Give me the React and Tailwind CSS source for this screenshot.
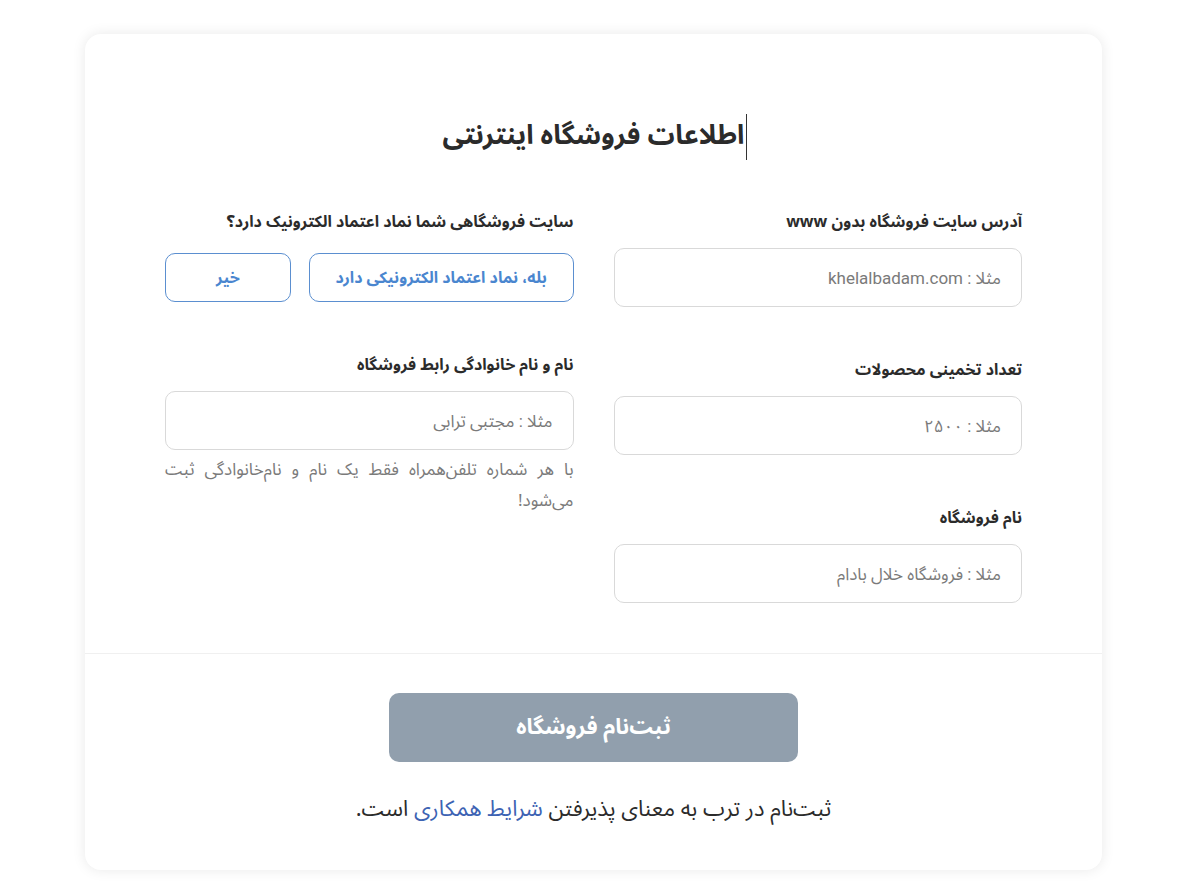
import React from "react";

const font = { fontFamily: '"Noto Sans Arabic", "DejaVu Sans", "Noto Sans", sans-serif' };

function Field({ label, placeholder, className = "" }) {
  return (
    <div className={"flex flex-col " + className}>
      <label className="text-[16px] font-bold text-[#2b2b2b] leading-[20px]">{label}</label>
      <input
        dir="rtl"
        placeholder={placeholder}
        className="mt-[16px] h-[59px] w-full rounded-[10px] border border-[#d9d9d9] bg-white px-[20px] text-[17px] text-[#444] placeholder:text-[#7a7a7a] outline-none"
        style={{ fontFamily: 'Roboto, "Noto Sans Arabic", "DejaVu Sans", sans-serif' }}
      />
    </div>
  );
}

export default function App() {
  return (
    <div dir="rtl" className="min-h-[895px] w-full bg-white pt-[34px] pb-[27px]" style={font}>
      <div className="mx-auto w-[1017px] -translate-x-[2px] rounded-[16px] bg-white shadow-[0_0_14px_rgba(0,0,0,0.09)]">
        <div className="px-[80px] pt-[82px] pb-[50px]">
          <div className="flex justify-center">
            <h1 className="relative text-[27px] font-bold leading-[40px] text-[#2b2b2b]">
              اطلاعات فروشگاه اینترنتی
              <span className="absolute right-[-3px] top-[-2px] h-[46px] w-px bg-[#333]"></span>
            </h1>
          </div>
          <div className="mt-[56px] grid grid-cols-2 gap-x-[40px]">
            <div className="flex flex-col">
              <Field label="آدرس سایت فروشگاه بدون www" placeholder="مثلا : khelalbadam.com" />
              <Field className="mt-[53px]" label="تعداد تخمینی محصولات" placeholder="مثلا : ۲۵۰۰" />
              <Field className="mt-[53px]" label="نام فروشگاه" placeholder="مثلا : فروشگاه خلال بادام" />
            </div>
            <div className="flex flex-col">
              <div className="text-[16px] font-bold text-[#2b2b2b] leading-[20px]">
                سایت فروشگاهی شما نماد اعتماد الکترونیک دارد؟
              </div>
              <div className="mt-[21px] flex gap-[18px]">
                <button className="h-[49px] w-[265px] rounded-[10px] border border-[#5b8fd0] bg-white text-[16px] font-bold text-[#4a86cf]">
                  بله، نماد اعتماد الکترونیکی دارد
                </button>
                <button className="h-[49px] w-[126px] rounded-[10px] border border-[#5b8fd0] bg-white text-[16px] font-bold text-[#4a86cf]">
                  خیر
                </button>
              </div>
              <Field className="mt-[53px]" label="نام و نام خانوادگی رابط فروشگاه" placeholder="مثلا : مجتبی ترابی" />
              <p className="mt-[5px] text-justify text-[17px] leading-[31px] text-[#7a7a7a]">
                با هر شماره تلفن‌همراه فقط یک نام و نام‌خانوادگی ثبت می‌شود!
              </p>
            </div>
          </div>
        </div>
        <div className="h-px w-full bg-[#f0f0f0]"></div>
        <div className="flex flex-col items-center pt-[39px] pb-[46px]">
          <button className="h-[69px] w-[409px] rounded-[10px] bg-[#919fad] text-[22px] font-bold text-white">
            ثبت‌نام فروشگاه
          </button>
          <p className="mt-[32px] text-[22px] leading-[30px] text-[#2b2b2b]">
            ثبت‌نام در ترب به معنای پذیرفتن <a className="text-[#3d63b3]">شرایط همکاری</a> است.
          </p>
        </div>
      </div>
    </div>
  );
}
